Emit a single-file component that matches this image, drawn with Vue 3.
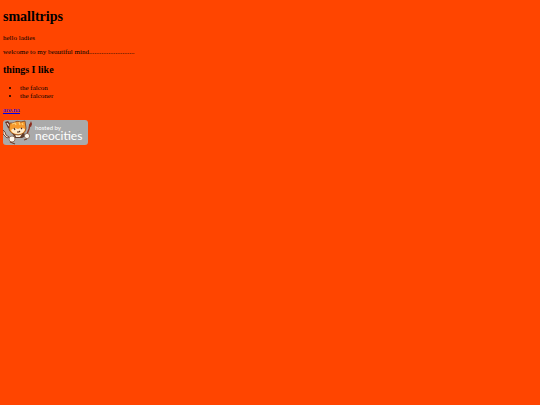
<template>
  <main class="page">
    <h1>smalltrips</h1>
    <p>hello ladies</p>
    <p>welcome to my beautiful mind{{ dots }}</p>

    <h2>things I like</h2>
    <ul>
      <li v-for="item in likes" :key="item">{{ item }}</li>
    </ul>

    <p><a href="https://www.are.na">are.na</a></p>

    <a class="badge" href="https://neocities.org" aria-label="hosted by neocities">
      <svg class="cat" viewBox="0 0 30 25" aria-hidden="true">
        <!-- pencil and brush -->
        <path d="M2 2 L5 1 L9 6 L8 9 L5 8 Z" fill="#6b3428" />
        <path d="M4 3 L7 7" stroke="#f4e4d0" stroke-width="1.2" />
        <path d="M27 4 L26 9 L24 14" stroke="#8c3a26" stroke-width="1.4" fill="none" />
        <path d="M28 1 L29 4 L28 7 L26 6 Z" fill="#8c2a1c" />
        <!-- body -->
        <path d="M9 13 L21 13 L23 16 L19 18 L12 18 Z" fill="#5e3a2a" />
        <path d="M12 14 L19 14 L17 17 L13 17 Z" fill="#fff4df" />
        <!-- head and ears -->
        <path d="M6 9 L7 3 L10 3 Q14 0 18 2 L22 1 L23 8 Q23 14 15 15 Q7 14 6 9 Z" fill="#f59a2e" stroke="#7a4220" stroke-width="0.8" />
        <path d="M8 10 Q11 7 15 9 Q18 7 22 9 Q21 14 15 14 Q9 14 8 10 Z" fill="#ffe9c6" />
        <path d="M9 4 L12 3 L13 5 M16 2 L17 5 M19 3 L20 5" stroke="#ffd277" stroke-width="1.2" fill="none" />
        <path d="M11 8 L12 10 M18 8 L19 9 M14 12 L16 12 L17 11" stroke="#482719" stroke-width="1.1" fill="none" />
        <!-- paws -->
        <circle cx="9" cy="19" r="3" fill="#fff8ed" stroke="#80604c" stroke-width="0.8" />
        <circle cx="24" cy="16" r="2.6" fill="#fff8ed" stroke="#80604c" stroke-width="0.8" />
        <!-- tail and feet -->
        <path d="M0 10 L2 12 L3 15 L6 17 L4 18 L0 14 Z" fill="#f5e0ca" stroke="#5e3024" stroke-width="0.8" />
        <path d="M7 22 L12 24 M24 19 L21 20" stroke="#70402c" stroke-width="1.2" />
      </svg>
      <span class="badge-text">
        <span class="hosted">hosted by</span>
        <span class="brand">neocities</span>
      </span>
    </a>
  </main>
</template>

<script setup>
const dots = '.'.repeat(26)

const likes = ['the falcon', 'the falconer']
</script>

<style>
body {
  background: #ff4500;
}
</style>

<style scoped>
.page {
  display: flow-root;
  padding: 0 3px;
  color: #000000;
  font-family: "Liberation Serif", "Times New Roman", serif;
  font-size: 7px;
  line-height: 8px;
}

h1 {
  margin: 9px 0;
  font-size: 14px;
  line-height: 16px;
}

h2 {
  margin: 8px 0;
  font-size: 10px;
  line-height: 12px;
}

p {
  margin: 6px 0;
}

ul {
  margin: 6px 0;
  padding-left: 17px;
}

a {
  color: #0000ee;
}

.badge {
  display: flex;
  width: fit-content;
  padding-right: 6px;
  border-radius: 3px;
  background: #aaaaaa;
  color: #ffffff;
  font-family: Lato, "Open Sans", sans-serif;
  text-decoration: none;
}

.cat {
  width: 30px;
  height: 25px;
}

.badge-text {
  display: flex;
  flex-direction: column;
  padding: 4px 0 0 2px;
}

.hosted {
  font-size: 6px;
  line-height: 7px;
}

.brand {
  font-size: 12px;
  line-height: 9px;
}
</style>
